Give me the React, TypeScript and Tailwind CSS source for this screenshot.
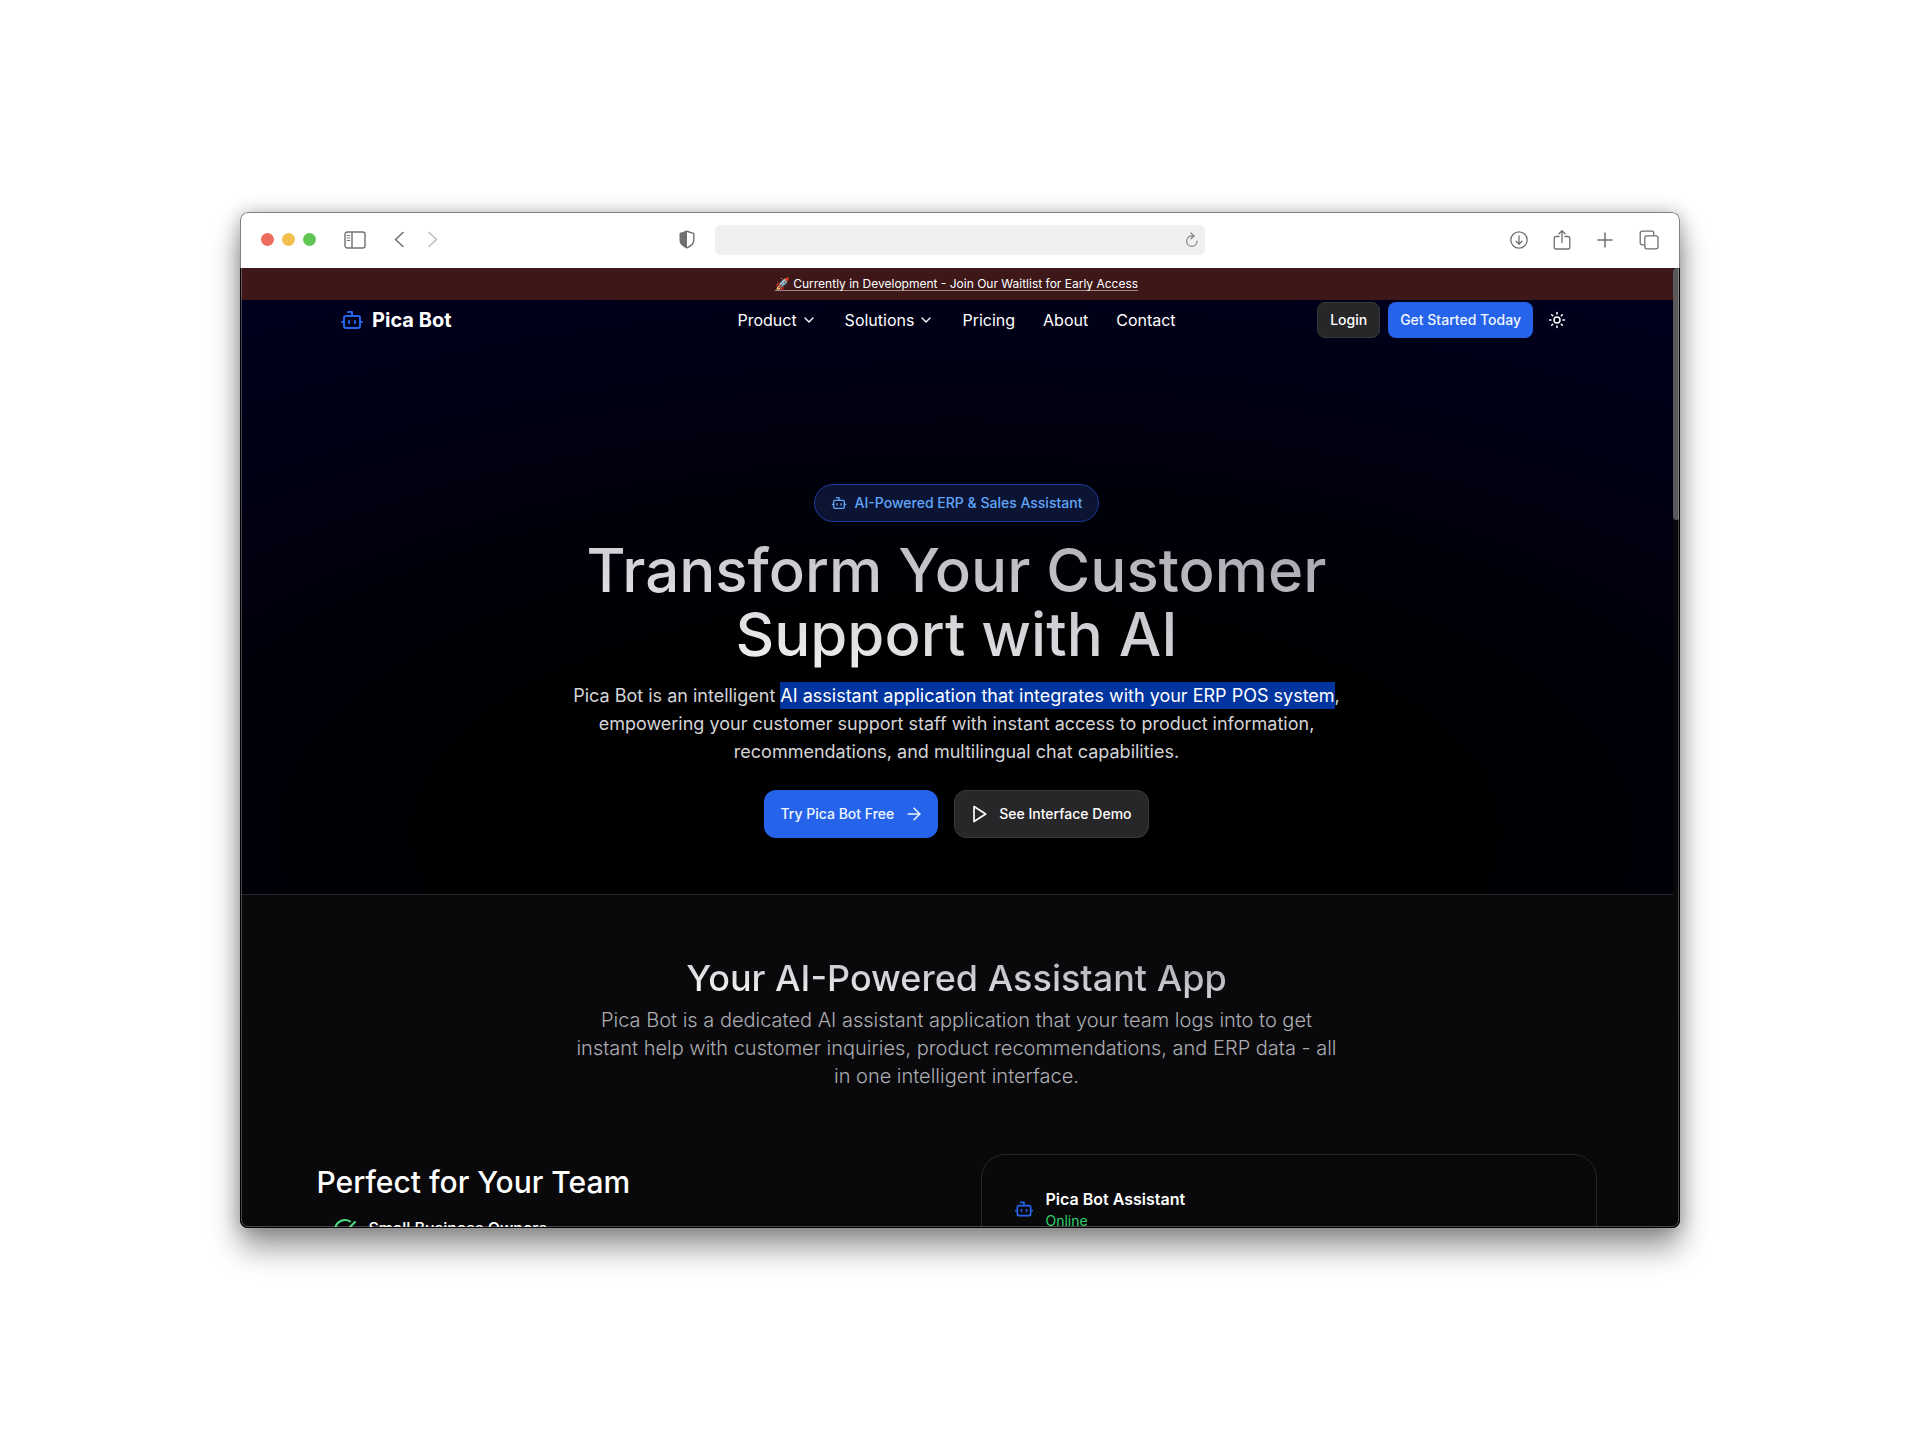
import { ArrowRight, Bot, ChevronDown, CircleCheckBig, Sun } from "lucide-react";

function Toolbar() {
  return (
    <div className="flex h-14 shrink-0 items-center rounded-t-lg border border-b-0 border-[#808080] bg-white px-5 pb-0.5 text-[#707070]">
      <div className="flex flex-1 items-center">
        <div className="flex gap-2">
          <span className="size-[13px] rounded-full bg-[#ec6a5e]" />
          <span className="size-[13px] rounded-full bg-[#f4bf4f]" />
          <span className="size-[13px] rounded-full bg-[#61c554]" />
        </div>
        <button aria-label="Toggle sidebar" className="ml-7">
          <svg width="22" height="18" viewBox="0 0 22 18" fill="none" stroke="currentColor" strokeWidth="1.4">
            <rect x="1" y="1" width="20" height="16" rx="2.2" />
            <path d="M8 1v16" />
            <path d="M3.2 4.5h2.6M3.2 7h2.6M3.2 9.5h2.6" strokeWidth="1" strokeLinecap="round" />
          </svg>
        </button>
        <button aria-label="Back" className="ml-7">
          <svg width="10" height="17" viewBox="0 0 10 17" fill="none" stroke="currentColor" strokeWidth="1.6" strokeLinecap="round" strokeLinejoin="round">
            <path d="M9 1.500 1.500 8.500 9 15.500" />
          </svg>
        </button>
        <button aria-label="Forward" className="ml-6 text-[#bdbdbd]">
          <svg width="10" height="17" viewBox="0 0 10 17" fill="none" stroke="currentColor" strokeWidth="1.6" strokeLinecap="round" strokeLinejoin="round">
            <path d="M1 1.500 8.500 8.500 1 15.500" />
          </svg>
        </button>
        <button aria-label="Privacy report" className="mr-5 ml-auto">
          <svg width="16" height="19" viewBox="0 0 16 19" fill="none" stroke="currentColor" strokeWidth="1.4" strokeLinejoin="round">
            <path d="M8 1.2c2 1.300 4.200 1.500 6.200 2 .4 .1 .6 .4 .6 .8v6.500c0 3.800-3.600 5.800-6.800 7.300C4.800 16.300 1.200 14.300 1.200 10.500V4c0-.4.2-.7.6-.8 2-.5 4.200-.7 6.200-2Z" />
            <path d="M8 1.2v16.600C4.800 16.300 1.200 14.300 1.200 10.500V4c0-.4.2-.7.6-.8 2-.5 4.200-.7 6.200-2Z" fill="currentColor" stroke="none" />
          </svg>
        </button>
      </div>
      <div className="flex h-[30px] w-[35%] items-center rounded-md bg-[#f0f0f0] pr-1.5 focus-within:ring-1">
        <input aria-label="Address" className="min-w-0 flex-1 bg-transparent px-3 text-sm outline-none" />
        <button aria-label="Reload" className="text-[#8a8a8a]">
          <svg width="14" height="16" viewBox="0 0 14 16" fill="none" stroke="currentColor" strokeWidth="1.3" strokeLinecap="round" strokeLinejoin="round">
            <path d="M9 4H6.200a5.200 5.200 0 1 0 5.800 5.200" />
            <path d="M6 1l3 3L6 6.800" />
          </svg>
        </button>
      </div>
      <div className="flex flex-1 items-center justify-end gap-[25px]">
        <button aria-label="Downloads">
          <svg width="18" height="18" viewBox="0 0 18 18" fill="none" stroke="currentColor" strokeWidth="1.3" strokeLinecap="round" strokeLinejoin="round">
            <circle cx="9" cy="9" r="8.200" />
            <path d="M9 5v8M6 10.200l3 3 3-3" />
          </svg>
        </button>
        <button aria-label="Share">
          <svg width="18" height="20" viewBox="0 0 18 20" fill="none" stroke="currentColor" strokeWidth="1.3" strokeLinecap="round" strokeLinejoin="round">
            <path d="M6 6.500H3.200C2 6.500 1.200 7.300 1.200 8.500V17c0 1.200.8 2 2 2h11.600c1.200 0 2-.8 2-2V8.500c0-1.200-.8-2-2-2H12" />
            <path d="M9 12.500V1M6 3.800 9 .8l3 3" />
          </svg>
        </button>
        <button aria-label="New tab">
          <svg width="18" height="18" viewBox="0 0 18 18" fill="none" stroke="currentColor" strokeWidth="1.5" strokeLinecap="round">
            <path d="M9 2v14M2 9h14" />
          </svg>
        </button>
        <button aria-label="Tab overview">
          <svg width="20" height="20" viewBox="0 0 20 20" fill="none" stroke="currentColor" strokeWidth="1.3" strokeLinejoin="round">
            <rect x="5.800" y="5.800" width="13.200" height="13" rx="2" />
            <path d="M5.800 14.800H3.200c-1.200 0-2-.8-2-2V3.200c0-1.200.8-2 2-2h9.600c1.200 0 2 .8 2 2v2.600" />
          </svg>
        </button>
      </div>
    </div>
  );
}

function PlayOutline() {
  return (
    <svg width="20" height="20" viewBox="0 0 24 24" fill="none" stroke="currentColor" strokeWidth="2" strokeLinejoin="round">
      <polygon points="6 3 20 12 6 21 6 3" />
    </svg>
  );
}

function Header() {
  return (
    <header className="flex h-10 shrink-0 items-center px-[100px]">
      <a href="#" className="flex flex-1 items-center gap-2 text-xl font-bold">
        <Bot className="size-6 text-[#2563eb]" />
        Pica Bot
      </a>
      <nav className="flex items-center gap-7 text-base font-normal">
        <button className="flex items-center gap-1">
          Product <ChevronDown className="size-4" />
        </button>
        <button className="flex items-center gap-1">
          Solutions <ChevronDown className="size-4" />
        </button>
        <a href="#pricing">Pricing</a>
        <a href="#about">About</a>
        <a href="#contact">Contact</a>
      </nav>
      <div className="flex flex-1 items-center justify-end gap-2 text-sm font-medium">
        <button className="h-9 rounded-lg border border-[#38383a] bg-[#27272a] px-3">Login</button>
        <button className="h-9 rounded-lg bg-[#2563eb] px-3 text-blue-50">Get Started Today</button>
        <button aria-label="Toggle theme" className="flex h-9 w-8 items-center justify-center">
          <Sun className="size-[18px]" />
        </button>
      </div>
    </header>
  );
}

function Hero() {
  return (
    <section className="flex shrink-0 flex-col items-center border-b border-[#27272a] pt-36 pb-14 text-center">
      <div className="flex h-[38px] items-center gap-2 rounded-full border border-[#1e3a9a] bg-[#0b1533] px-4 text-sm font-medium text-[#60a5fa]">
        <Bot className="size-4" />
        AI-Powered ERP &amp; Sales Assistant
      </div>
      <h1 className="mt-4 max-w-[780px] bg-linear-to-tr from-white to-[#a1a1aa] bg-clip-text pb-2 text-6xl leading-16 font-medium text-transparent">
        Transform Your Customer Support with AI
      </h1>
      <p className="mt-2 max-w-[780px] text-lg leading-7 text-[#d4d4d8]">
        Pica Bot is an intelligent{" "}
        <mark className="bg-[#0035a0] py-[3px] text-white">AI assistant application that integrates with your ERP POS system</mark>,
        empowering your customer support staff with instant access to product information, recommendations, and
        multilingual chat capabilities.
      </p>
      <div className="mt-6 flex gap-4 text-sm font-medium">
        <button className="flex h-12 items-center gap-2.5 rounded-xl bg-[#2563eb] pr-3.5 pl-4 text-blue-50">
          Try Pica Bot Free <ArrowRight className="size-5" strokeWidth={1.8} />
        </button>
        <button className="flex h-12 items-center gap-2.5 rounded-xl border border-[#38383a] bg-[#27272a] pr-4 pl-3.5">
          <PlayOutline /> See Interface Demo
        </button>
      </div>
    </section>
  );
}

function Features() {
  return (
    <section className="flex-1 bg-[#09090b] pt-[63px]">
      <div className="mx-auto flex max-w-3xl flex-col items-center text-center">
        <h2 className="bg-linear-to-tr from-white to-[#a1a1aa] bg-clip-text text-4xl leading-10 font-medium text-transparent">
          Your AI-Powered Assistant App
        </h2>
        <p className="mt-2 text-xl leading-7 font-light text-[#acacb2]">
          Pica Bot is a dedicated AI assistant application that your team logs into to get instant help with customer
          inquiries, product recommendations, and ERP data - all in one intelligent interface.
        </p>
      </div>
      <div className="mx-auto mt-16 grid max-w-[1280px] grid-cols-2 gap-12">
        <div className="pt-2">
          <h3 className="text-3xl leading-10 font-medium">Perfect for Your Team</h3>
          <div className="mt-3 flex gap-3 pl-4">
            <CircleCheckBig className="mt-1 size-6 text-[#4ade80]" />
            <h4 className="text-base leading-7 font-medium">Small Business Owners</h4>
          </div>
        </div>
        <div className="h-60 rounded-3xl border border-[#27272a] p-8">
          <div className="flex items-center gap-3">
            <Bot className="size-5 text-[#2563eb]" />
            <div>
              <h4 className="text-base leading-6 font-semibold">Pica Bot Assistant</h4>
              <p className="text-sm leading-5 text-[#2fd36b]">Online</p>
            </div>
          </div>
        </div>
      </div>
    </section>
  );
}

export default function App() {
  return (
    <main className="flex min-h-screen items-center justify-center bg-white font-['Inter',sans-serif]">
      <div className="flex aspect-[1440/1016] w-3/4 flex-col overflow-hidden rounded-lg shadow-[0_20px_30px_rgba(0,0,0,0.4),0_0_18px_rgba(0,0,0,0.25)]">
        <Toolbar />
        <div className="relative flex min-h-0 flex-1 bg-black text-white">
          <div className="flex min-w-0 flex-1 flex-col bg-[radial-gradient(125%_125%_at_50%_90%,#000_25%,#00002a_100%)] bg-size-[100%_626px] bg-no-repeat">
            <div className="flex h-8 shrink-0 items-center justify-center bg-[#3e1718] text-xs font-normal">
              <a href="#waitlist" className="underline decoration-white/50 underline-offset-2">
                🚀 Currently in Development - Join Our Waitlist for Early Access
              </a>
            </div>
            <Header />
            <Hero />
            <Features />
          </div>
          <div className="w-[7px] bg-[#09090b]">
            <div className="h-[252px] rounded-full bg-[#595959]" />
          </div>
          <div className="pointer-events-none absolute inset-0 rounded-b-lg border border-t-0 border-black">
            <div className="h-full rounded-b-[7px] border border-t-0 border-white/25" />
          </div>
        </div>
      </div>
    </main>
  );
}
